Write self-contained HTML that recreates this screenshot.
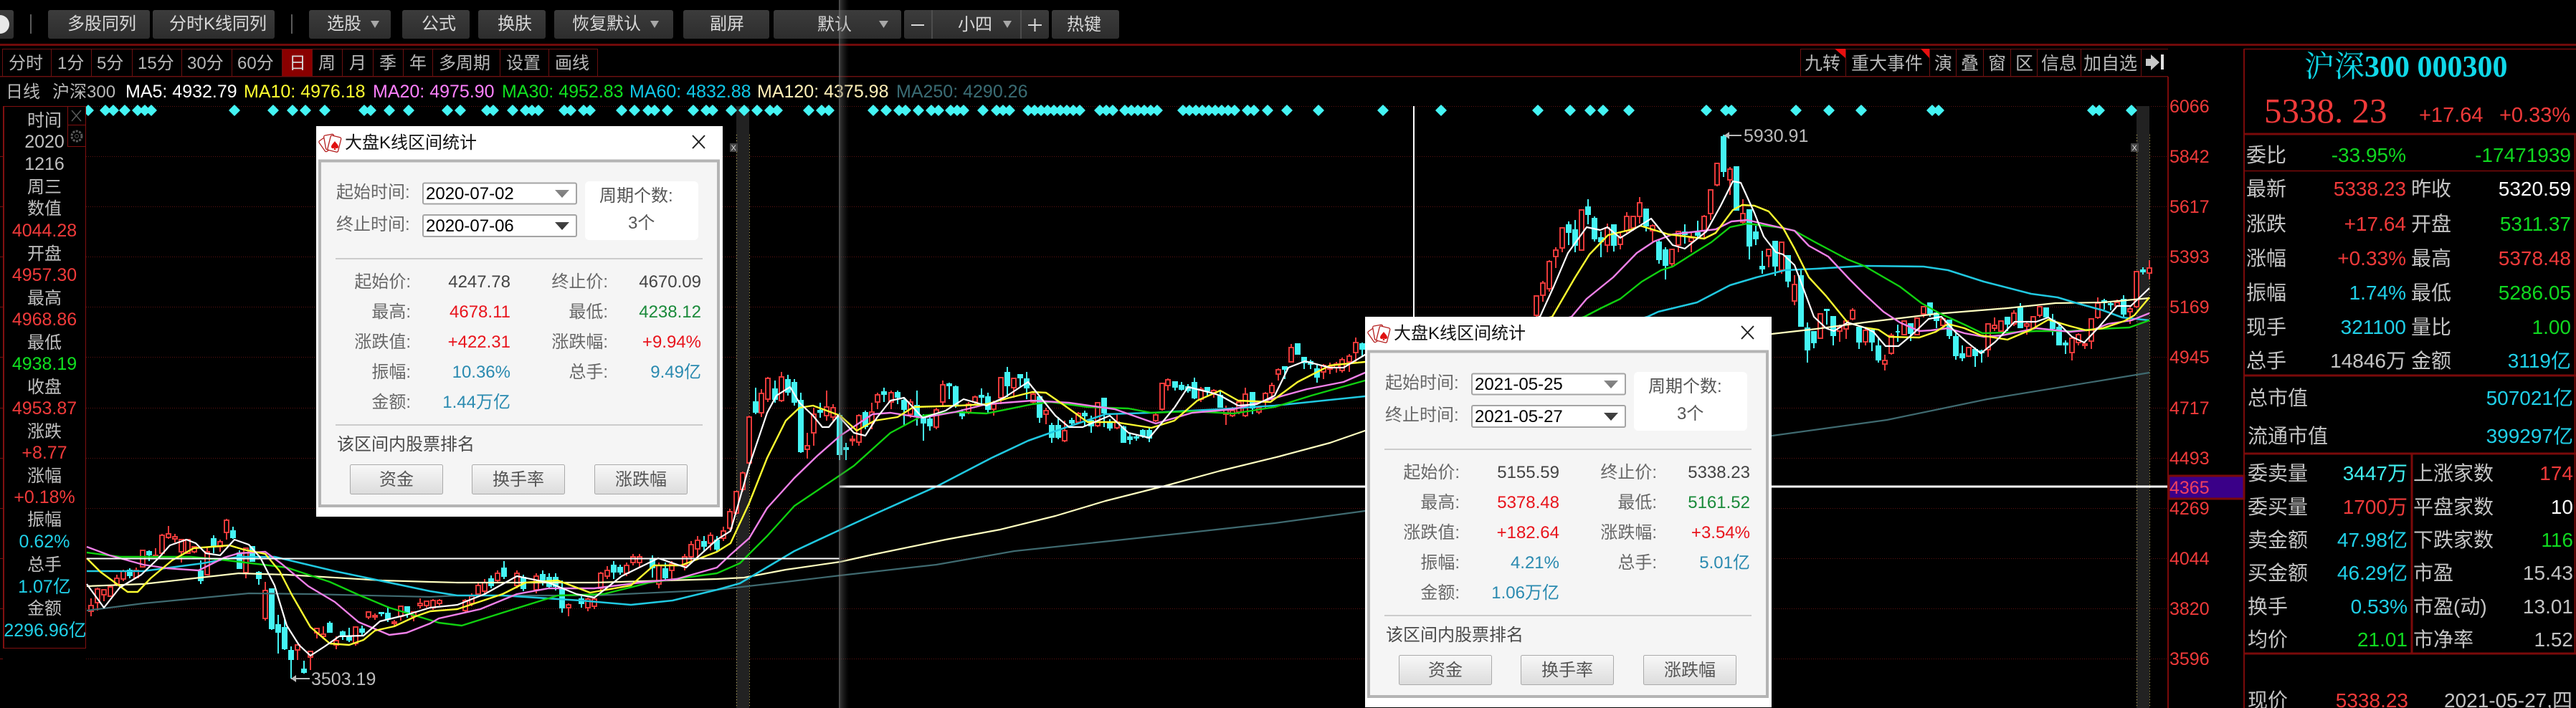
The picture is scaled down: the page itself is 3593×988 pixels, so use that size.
<!DOCTYPE html>
<html lang="zh-CN">
<head>
<meta charset="utf-8">
<title>沪深300 000300</title>
<style>
html,body{margin:0;padding:0;background:#000;width:3593px;height:988px;overflow:hidden}
svg{display:block;position:absolute;left:0;top:0}
text{font-family:"Liberation Sans","Noto Sans CJK SC",sans-serif;white-space:pre}
.tb text{font-size:24px;fill:#d8d8d8}
.tab text{font-size:24px;fill:#b8b8b8}
.axis text{font-size:25px;fill:#f03a3a}
.lp text{font-size:24px;text-anchor:middle;fill:#c0c0c0}
.lp .r{fill:#f03a3a;font-size:25px}
.lp .g{fill:#10e020;font-size:25px}
.lp .c{fill:#20d0e8;font-size:25px}
.rp text{font-size:28px;fill:#c4c4c4}
.rp .e{text-anchor:end}
.rp .r{fill:#f03a3a}
.rp .g{fill:#10d820}
.rp .c{fill:#20d0e8}
.rp .w{fill:#fff}
.rp .l{fill:#40f0f0}
.dl text{font-size:24px;fill:#686868}
.dl .e{text-anchor:end}
.dl .m{text-anchor:middle}
.dl .v{fill:#444}
.dl .r{fill:#e8141c}
.dl .g{fill:#1a8a3a}
.dl .b{fill:#2a8ab0}
.dl .t{fill:#111}
.dl .k{fill:#000}
</style>
</head>
<body>
<svg width="3593" height="988" viewBox="0 0 3593 988" xmlns="http://www.w3.org/2000/svg">
<defs>
<linearGradient id="btn" x1="0" y1="0" x2="0" y2="1"><stop offset="0" stop-color="#3c3c3c"/><stop offset="1" stop-color="#2d2d2d"/></linearGradient>
<linearGradient id="gb" x1="0" y1="0" x2="0" y2="1"><stop offset="0" stop-color="#f8f8f8"/><stop offset="1" stop-color="#dcdcdc"/></linearGradient>
<linearGradient id="sh" x1="0" y1="0" x2="1" y2="0"><stop offset="0" stop-color="#808080" stop-opacity=".7"/><stop offset=".2" stop-color="#606060" stop-opacity=".45"/><stop offset="1" stop-color="#404040" stop-opacity="0"/></linearGradient>
<linearGradient id="tri" x1="0" y1="0" x2="0" y2="1"><stop offset="0" stop-color="#888"/><stop offset="1" stop-color="#333"/></linearGradient>
</defs>

<!-- toolbar -->
<g fill="url(#btn)">
<rect x="-4" y="14" width="23" height="40" rx="3"/>
<rect x="67" y="14" width="142" height="40" rx="3"/>
<rect x="213" y="14" width="170" height="40" rx="3"/>
<rect x="431" y="14" width="114" height="40" rx="3"/>
<rect x="561" y="14" width="94" height="40" rx="3"/>
<rect x="667" y="14" width="94" height="40" rx="3"/>
<rect x="773" y="14" width="166" height="40" rx="3"/>
<rect x="953" y="14" width="120" height="40" rx="3"/>
<rect x="1079" y="14" width="178" height="40" rx="3"/>
<rect x="1261" y="14" width="202" height="40" rx="3"/>
<rect x="1467" y="14" width="94" height="40" rx="3"/>
</g>
<circle cx="0" cy="34" r="13" fill="#e8e8e8"/>
<path d="M43 20V47M407 20V47" stroke="#5a5a5a" stroke-width="2"/>
<path d="M1300 14V54M1424 14V54" stroke="#555" stroke-width="1.5"/>
<g class="tb">
<text x="94" y="41">多股同列</text>
<text x="236" y="41">分时K线同列</text>
<text x="456" y="41">选股</text>
<text x="588" y="41">公式</text>
<text x="694" y="41">换肤</text>
<text x="798" y="41">恢复默认</text>
<text x="990" y="41">副屏</text>
<text x="1140" y="42">默认</text>
<text x="1336" y="42">小四</text>
<text x="1488" y="42">热键</text>
</g>
<path d="M517 29h12l-6 10zM907 29h12l-6 10zM1226 29h13l-6.500 10zM1399 29h12l-6 10z" fill="#a8a8a8"/>
<path d="M1271 35h18M1434 35h19M1443.500 26v18" stroke="#d8d8d8" stroke-width="2"/>

<rect x="0" y="61" width="3593" height="3" fill="#700a0a"/>

<!-- tabs -->
<rect x="393" y="68" width="43" height="38" fill="#8a0000"/>
<path d="M3 68.500H833M3.500 68V106M71.500 68V106M127.500 68V106M184.500 68V106M253.500 68V106M323.500 68V106M393.500 68V106M435.500 68V106M477.500 68V106M520.500 68V106M562.500 68V106M603.500 68V106M697.500 68V106M765.500 68V106M833.500 68V106" stroke="#6a1010" stroke-width="1" fill="none"/>
<rect x="0" y="106" width="3024" height="1.500" fill="#6a1010"/>
<g class="tab">
<text x="12" y="96">分时</text>
<text x="80" y="96">1分</text>
<text x="135" y="96">5分</text>
<text x="192" y="96">15分</text>
<text x="261" y="96">30分</text>
<text x="331" y="96">60分</text>
<text x="403" y="96" style="fill:#d8d8d8">日</text>
<text x="444" y="96">周</text>
<text x="487" y="96">月</text>
<text x="529" y="96">季</text>
<text x="571" y="96">年</text>
<text x="612" y="96">多周期</text>
<text x="706" y="96">设置</text>
<text x="774" y="96">画线</text>
</g>

<!-- right top tool box -->
<path d="M2511.500 68.500H3024M2511.500 68V107M2574.500 68V107M2691.500 68V107M2728.500 68V107M2766.500 68V107M2804.500 68V107M2841.500 68V107M2902.500 68V107M2986.500 68V107" stroke="#6a1010" stroke-width="1" fill="none"/>
<path d="M2559 68h15v13zM2679 68h12v13z" fill="#e81010"/>
<g class="tab">
<text x="2517" y="97" style="font-size:25px">九转</text>
<text x="2582" y="97" style="font-size:25px">重大事件</text>
<text x="2698" y="97" style="font-size:25px">演</text>
<text x="2735" y="97" style="font-size:25px">叠</text>
<text x="2773" y="97" style="font-size:25px">窗</text>
<text x="2811" y="97" style="font-size:25px">区</text>
<text x="2847" y="97" style="font-size:25px">信息</text>
<text x="2906" y="97" style="font-size:25px">加自选</text>
</g>
<path d="M2993 82h7v-6l12 11-12 11v-6h-7z" fill="#c8c8c8"/>
<rect x="3014" y="76" width="4" height="21" fill="#e0e0e0"/>

<!-- MA info -->
<g style="font-size:25px">
<text x="8" y="136" fill="#b8b8b8" style="font-size:24px">日线</text>
<text x="73" y="136" fill="#b8b8b8" style="font-size:24px">沪深300</text>
<text x="175" y="136" fill="#fff" style="font-size:25px">MA5: 4932.79</text>
<text x="340" y="136" fill="#ffff30" style="font-size:25px">MA10: 4976.18</text>
<text x="520" y="136" fill="#ff80ff" style="font-size:25px">MA20: 4975.90</text>
<text x="700" y="136" fill="#10e020" style="font-size:25px">MA30: 4952.83</text>
<text x="878" y="136" fill="#10c8e8" style="font-size:25px">MA60: 4832.88</text>
<text x="1056" y="136" fill="#fff0b8" style="font-size:25px">MA120: 4375.98</text>
<text x="1250" y="136" fill="#3a6c74" style="font-size:25px">MA250: 4290.26</text>
</g>

<!-- grid -->
<path d="M120 148.500H3024M120 218.500H3024M120 288.500H3024M120 358.500H3024M120 428.500H3024M120 498.500H3024M120 569.500H3024M120 639.500H3024M120 709.500H3024M120 779.500H3024M120 849.500H3024M120 919.500H3024" stroke="#5e1212" stroke-width="1" stroke-dasharray="1 2" fill="none"/>
<path d="M0 218.500h4M0 288.500h4M0 358.500h4M0 428.500h4M0 498.500h4M0 569.500h4M0 639.500h4M0 709.500h4M0 779.500h4M0 849.500h4M0 919.500h4" stroke="#7a1010" stroke-width="1"/>

<!-- selected bands -->
<rect x="1027" y="148" width="18" height="840" fill="#222"/>
<rect x="2980" y="148" width="18" height="840" fill="#222"/>
<path d="M1027.500 188V988M1045.500 188V988M2980.500 188V988M2998.500 188V988" stroke="#c8b860" stroke-width="1" stroke-dasharray="1 3"/>
<rect x="1018" y="200" width="11" height="12" fill="#444"/>
<rect x="2972" y="200" width="11" height="12" fill="#444"/>
<text x="1019.500" y="210" fill="#ddd" style="font-size:11px">X</text>
<text x="2973.500" y="210" fill="#ddd" style="font-size:11px">X</text>

<!-- diamonds -->
<path fill="#44f4f4" stroke="#44f4f4" stroke-width="1.500" stroke-linejoin="round" d="M123 147l7 7-7 7-7-7zM147 147l7 7-7 7-7-7zM158 147l7 7-7 7-7-7zM174 147l7 7-7 7-7-7zM192 147l7 7-7 7-7-7zM202 147l7 7-7 7-7-7zM211 147l7 7-7 7-7-7zM327 147l7 7-7 7-7-7zM381 147l7 7-7 7-7-7zM408 147l7 7-7 7-7-7zM426 147l7 7-7 7-7-7zM453 147l7 7-7 7-7-7zM508 147l7 7-7 7-7-7zM517 147l7 7-7 7-7-7zM543 147l7 7-7 7-7-7zM570 147l7 7-7 7-7-7zM624 147l7 7-7 7-7-7zM642 147l7 7-7 7-7-7zM679 147l7 7-7 7-7-7zM688 147l7 7-7 7-7-7zM715 147l7 7-7 7-7-7zM733 147l7 7-7 7-7-7zM742 147l7 7-7 7-7-7zM751 147l7 7-7 7-7-7zM787 147l7 7-7 7-7-7zM796 147l7 7-7 7-7-7zM814 147l7 7-7 7-7-7zM823 147l7 7-7 7-7-7zM867 147l7 7-7 7-7-7zM885 147l7 7-7 7-7-7zM904 147l7 7-7 7-7-7zM913 147l7 7-7 7-7-7zM931 147l7 7-7 7-7-7zM967 147l7 7-7 7-7-7zM985 147l7 7-7 7-7-7zM994 147l7 7-7 7-7-7zM1020 147l7 7-7 7-7-7zM1038 147l7 7-7 7-7-7zM1056 147l7 7-7 7-7-7zM1074 147l7 7-7 7-7-7zM1084 147l7 7-7 7-7-7zM1128 147l7 7-7 7-7-7zM1146 147l7 7-7 7-7-7zM1156 147l7 7-7 7-7-7zM1218 147l7 7-7 7-7-7zM1236 147l7 7-7 7-7-7zM1254 147l7 7-7 7-7-7zM1263 147l7 7-7 7-7-7zM1281 147l7 7-7 7-7-7zM1299 147l7 7-7 7-7-7zM1309 147l7 7-7 7-7-7zM1326 147l7 7-7 7-7-7zM1335 147l7 7-7 7-7-7zM1344 147l7 7-7 7-7-7zM1371 147l7 7-7 7-7-7zM1390 147l7 7-7 7-7-7zM1399 147l7 7-7 7-7-7zM1408 147l7 7-7 7-7-7zM1434 147l7 7-7 7-7-7zM1443 147l7 7-7 7-7-7zM1452 147l7 7-7 7-7-7zM1461 147l7 7-7 7-7-7zM1470 147l7 7-7 7-7-7zM1479 147l7 7-7 7-7-7zM1488 147l7 7-7 7-7-7zM1497 147l7 7-7 7-7-7zM1506 147l7 7-7 7-7-7zM1534 147l7 7-7 7-7-7zM1543 147l7 7-7 7-7-7zM1552 147l7 7-7 7-7-7zM1569 147l7 7-7 7-7-7zM1578 147l7 7-7 7-7-7zM1587 147l7 7-7 7-7-7zM1596 147l7 7-7 7-7-7zM1605 147l7 7-7 7-7-7zM1614 147l7 7-7 7-7-7zM1650 147l7 7-7 7-7-7zM1659 147l7 7-7 7-7-7zM1668 147l7 7-7 7-7-7zM1677 147l7 7-7 7-7-7zM1686 147l7 7-7 7-7-7zM1695 147l7 7-7 7-7-7zM1704 147l7 7-7 7-7-7zM1713 147l7 7-7 7-7-7zM1722 147l7 7-7 7-7-7zM1740 147l7 7-7 7-7-7zM1749 147l7 7-7 7-7-7zM1768 147l7 7-7 7-7-7zM1795 147l7 7-7 7-7-7zM1839 147l7 7-7 7-7-7zM1929 147l7 7-7 7-7-7zM2010 147l7 7-7 7-7-7zM2145 147l7 7-7 7-7-7zM2190 147l7 7-7 7-7-7zM2218 147l7 7-7 7-7-7zM2236 147l7 7-7 7-7-7zM2272 147l7 7-7 7-7-7zM2380 147l7 7-7 7-7-7zM2407 147l7 7-7 7-7-7zM2415 147l7 7-7 7-7-7zM2505 147l7 7-7 7-7-7zM2551 147l7 7-7 7-7-7zM2596 147l7 7-7 7-7-7zM2695 147l7 7-7 7-7-7zM2704 147l7 7-7 7-7-7zM2919 147l7 7-7 7-7-7zM2928 147l7 7-7 7-7-7zM2973 147l7 7-7 7-7-7z"/>

<!-- red candles -->
<path shape-rendering="crispEdges" fill="#000" stroke="#e83a3a" stroke-width="2" d="
M127 835V845h3V853h-6V845h3M127 853V860
M136 820V822h3V841h-6V822h3M136 841V852
M145 822V823h3V830h-6V823h3M145 830V839
M154 818V819h3V832h-6V819h3M154 832V833
M163 802V807h3V815h-6V807h3M163 815V818
M172 795V797h3V808h-6V797h3M172 808V811
M190 792V796h3V806h-6V796h3M190 806V807
M199 767V768h3V791h-6V768h3M199 791V792
M217 765V775h3V777h-6V775h3M217 777V778
M226 745V747h3V772h-6V747h3M226 772V775
M235 734V745h3V750h-6V745h3M235 750V752
M244 745V749h3V752h-6V749h3M244 752V757
M253 752V753h3V770h-6V753h3M253 770V785
M262 752V753h3V772h-6V753h3M262 772V773
M271 762V763h3V770h-6V763h3M271 770V772
M289 763V770h3V802h-6V770h3M289 802V803
M307 753V756h3V763h-6V756h3M307 763V770
M316 724V726h3V743h-6V726h3M316 743V753
M343 765V765h3V799h-6V765h3M343 799V807
M370 812V824h3V863h-6V824h3M370 863V866
M415 899V900h3V907h-6V900h3M415 907V921
M433 908V909h3V917h-6V909h3M433 917V935
M442 877V877h3V883h-6V877h3M442 883V891
M451 874V885h3V888h-6V885h3M451 888V892
M469 888V894h3V900h-6V894h3M469 900V906
M496 874V875h3V898h-6V875h3M496 898V901
M514 853V854h3V861h-6V854h3M514 861V864
M523 856V859h3V861h-6V859h3M523 861V865
M550 865V868h3V870h-6V868h3M550 870V874
M559 846V846h3V860h-6V846h3M559 860V866
M577 853V854h3V860h-6V854h3M577 860V867
M586 835V842h3V845h-6V842h3M586 845V849
M595 838V839h3V845h-6V839h3M595 845V848
M604 836V838h3V848h-6V838h3M604 848V851
M613 836V838h3V842h-6V838h3M613 842V845
M649 836V838h3V852h-6V838h3M649 852V855
M658 828V832h3V842h-6V832h3M658 842V846
M667 812V817h3V829h-6V817h3M667 829V832
M676 808V813h3V825h-6V813h3M676 825V829
M694 796V800h3V810h-6V800h3M694 810V812
M721 796V800h3V817h-6V800h3M721 817V821
M748 800V804h3V823h-6V804h3M748 823V828
M793 842V844h3V848h-6V844h3M793 848V860
M820 834V836h3V848h-6V836h3M820 848V853
M829 833V836h3V846h-6V836h3M829 846V850
M838 798V800h3V821h-6V800h3M838 821V825
M847 790V796h3V804h-6V796h3M847 804V808
M874 785V789h3V800h-6V789h3M874 800V804
M883 773V777h3V785h-6V777h3M883 785V789
M892 773V777h3V785h-6V777h3M892 785V792
M919 785V789h3V815h-6V789h3M919 815V821
M937 783V787h3V796h-6V787h3M937 796V810
M955 773V777h3V789h-6V777h3M955 789V796
M964 755V760h3V777h-6V760h3M964 777V785
M973 748V754h3V766h-6V754h3M973 766V780
M991 743V747h3V758h-6V747h3M991 758V768
M1009 735V741h3V751h-6V741h3M1009 751V755
M1018 710V714h3V737h-6V714h3M1018 737V740
M1027 685V686h3V716h-6V686h3M1027 716V718
M1036 658V660h3V683h-6V660h3M1036 683V686
M1045 580V582h3V646h-6V582h3M1045 646V648
M1062 543V549h3V576h-6V549h3M1062 576V582
M1071 526V528h3V557h-6V528h3M1071 557V561
M1090 519V526h3V559h-6V526h3M1090 559V561
M1126 604V622h3V627h-6V622h3M1126 627V640
M1135 569V578h3V604h-6V578h3M1135 604V622
M1153 545V568h3V580h-6V568h3M1153 580V587
M1162 564V569h3V582h-6V569h3M1162 582V587
M1189 608V613h3V615h-6V613h3M1189 615V622
M1198 578V580h3V617h-6V580h3M1198 617V622
M1216 562V575h3V590h-6V575h3M1216 590V599
M1224 548V551h3V561h-6V551h3M1224 561V571
M1243 545V548h3V561h-6V548h3M1243 561V571
M1270 557V561h3V578h-6V561h3M1270 578V583
M1306 569V572h3V596h-6V572h3M1306 596V599
M1315 531V537h3V561h-6V537h3M1315 561V568
M1351 561V564h3V575h-6V564h3M1351 575V578
M1360 552V554h3V561h-6V554h3M1360 561V566
M1386 559V564h3V571h-6V564h3M1386 571V580
M1396 526V527h3V555h-6V527h3M1396 555V564
M1414 527V528h3V541h-6V528h3M1414 541V555
M1441 547V550h3V561h-6V550h3M1441 561V564
M1459 569V573h3V578h-6V573h3M1459 578V592
M1485 587V601h3V615h-6V601h3M1485 615V617
M1504 575V577h3V589h-6V577h3M1504 589V590
M1531 561V562h3V594h-6V562h3M1531 594V596
M1558 578V589h3V597h-6V589h3M1558 597V599
M1612 576V579h3V587h-6V579h3M1612 587V589
M1621 534V535h3V571h-6V535h3M1621 571V573
M1629 528V530h3V538h-6V530h3M1629 538V545
M1675 540V543h3V557h-6V543h3M1675 557V561
M1693 543V545h3V548h-6V545h3M1693 548V555
M1710 566V571h3V578h-6V571h3M1710 578V593
M1719 568V573h3V580h-6V573h3M1719 580V582
M1728 559V561h3V575h-6V561h3M1728 575V578
M1737 541V550h3V580h-6V550h3M1737 580V582
M1756 566V569h3V575h-6V569h3M1756 575V578
M1765 547V549h3V561h-6V549h3M1765 561V571
M1774 534V538h3V548h-6V538h3M1774 548V561
M1783 514V516h3V522h-6V516h3M1783 522V531
M1801 480V485h3V505h-6V485h3M1801 505V506
M1846 508V510h3V519h-6V510h3M1846 519V529
M1855 506V512h3V515h-6V512h3M1855 515V522
M1864 505V508h3V513h-6V508h3M1864 513V520
M1872 499V502h3V517h-6V502h3M1872 517V520
M1882 494V497h3V505h-6V497h3M1882 505V519
M1891 471V478h3V492h-6V478h3M1891 492V505
M2143 412V413h3V440h-6V413h3M2143 440V442
M2152 392V395h3V412h-6V395h3M2152 412V421
M2161 363V365h3V403h-6V365h3M2161 403V407
M2170 345V349h3V358h-6V349h3M2170 358V374
M2179 318V318h3V346h-6V318h3M2179 346V352
M2206 293V293h3V349h-6V293h3M2206 349V350
M2242 312V318h3V342h-6V318h3M2242 342V352
M2260 325V330h3V341h-6V330h3M2260 341V348
M2269 296V302h3V322h-6V302h3M2269 322V325
M2278 302V302h3V318h-6V302h3M2278 318V322
M2287 275V283h3V302h-6V283h3M2287 302V312
M2305 313V315h3V322h-6V315h3M2305 322V337
M2332 348V348h3V368h-6V348h3M2332 368V372
M2341 322V323h3V342h-6V323h3M2341 342V352
M2359 325V332h3V337h-6V332h3M2359 337V352
M2377 300V302h3V322h-6V302h3M2377 322V332
M2386 264V265h3V298h-6V265h3M2386 298V307
M2395 227V228h3V258h-6V228h3M2395 258V260
M2413 233V236h3V251h-6V236h3M2413 251V272
M2431 278V298h3V310h-6V298h3M2431 310V312
M2467 348V348h3V357h-6V348h3M2467 357V373
M2485 338V338h3V377h-6V338h3M2485 377V382
M2503 384V397h3V420h-6V397h3M2503 420V426
M2539 437V438h3V472h-6V438h3M2539 472V473
M2566 453V457h3V462h-6V457h3M2566 462V477
M2575 447V448h3V459h-6V448h3M2575 459V473
M2584 430V433h3V445h-6V433h3M2584 445V447
M2602 458V461h3V477h-6V461h3M2602 477V482
M2629 495V503h3V508h-6V503h3M2629 508V517
M2638 465V468h3V493h-6V468h3M2638 493V495
M2656 447V448h3V467h-6V448h3M2656 467V468
M2674 443V444h3V467h-6V444h3M2674 467V468
M2683 427V428h3V438h-6V428h3M2683 438V443
M2710 443V445h3V454h-6V445h3M2710 454V456
M2746 484V485h3V497h-6V485h3M2746 497V498
M2773 452V452h3V488h-6V452h3M2773 488V498
M2782 443V454h3V458h-6V454h3M2782 458V462
M2791 447V448h3V462h-6V448h3M2791 462V463
M2809 433V437h3V452h-6V437h3M2809 452V455
M2827 450V452h3V455h-6V452h3M2827 455V467
M2836 442V442h3V458h-6V442h3M2836 458V460
M2845 427V428h3V440h-6V428h3M2845 440V443
M2890 470V472h3V492h-6V472h3M2890 492V503
M2899 465V467h3V478h-6V467h3M2899 478V482
M2908 477V480h3V482h-6V480h3M2908 482V487
M2917 444V445h3V476h-6V445h3M2917 476V487
M2926 415V423h3V443h-6V423h3M2926 443V445
M2953 418V422h3V427h-6V422h3M2953 427V428
M2971 427V431h3V435h-6V431h3M2971 435V452
M2980 378V379h3V428h-6V379h3M2980 428V430
M2998 363V374h3V381h-6V374h3M2998 381V390"/>

<!-- cyan candles -->
<path shape-rendering="crispEdges" fill="#44f4f4" stroke="#44f4f4" stroke-width="2" d="
M181 793V807M181 796h3V803h-6V796z
M208 768V783M208 770h3V774h-6V770z
M280 782V815M280 797h3V810h-6V797z
M298 747V772M298 752h3V763h-6V752z
M325 735V752M325 741h3V750h-6V741z
M334 768V794M334 772h3V793h-6V772z
M352 762V784M352 763h3V783h-6V763z
M361 797V816M361 799h3V807h-6V799z
M379 822V879M379 822h3V877h-6V822z
M388 858V912M388 872h3V882h-6V872z
M397 863V907M397 876h3V905h-6V876z
M406 902V947M406 908h3V920h-6V908z
M424 922V940M424 934h3V938h-6V934z
M460 867V883M460 870h3V882h-6V870z
M478 880V893M478 882h3V888h-6V882z
M487 876V896M487 889h3V893h-6V889z
M505 873V888M505 878h3V882h-6V878z
M532 854V860M532 855h3V856h-6V855z
M541 848V868M541 856h3V863h-6V856z
M568 846V862M568 847h3V855h-6V847z
M685 803V821M685 808h3V817h-6V808z
M703 783V808M703 793h3V804h-6V793z
M730 802V825M730 806h3V821h-6V806z
M757 796V817M757 802h3V813h-6V802z
M766 800V822M766 806h3V818h-6V806z
M775 800V824M775 806h3V818h-6V806z
M784 810V855M784 821h3V848h-6V821z
M811 832V848M811 836h3V842h-6V836z
M856 783V808M856 789h3V798h-6V789z
M865 788V802M865 792h3V798h-6V792z
M910 775V806M910 781h3V792h-6V781z
M928 785V810M928 794h3V806h-6V794z
M982 748V770M982 756h3V762h-6V756z
M1000 748V770M1000 754h3V766h-6V754z
M1054 541V578M1054 561h3V575h-6V561z
M1081 531V562M1081 543h3V557h-6V543z
M1099 523V552M1099 530h3V547h-6V530z
M1108 529V566M1108 534h3V561h-6V534z
M1117 548V632M1117 559h3V630h-6V559z
M1144 562V583M1144 573h3V575h-6V573z
M1171 576V642M1171 580h3V634h-6V580z
M1180 618V642M1180 625h3V627h-6V625z
M1207 573V599M1207 576h3V595h-6V576z
M1233 541V561M1233 547h3V550h-6V547z
M1252 545V564M1252 548h3V554h-6V548z
M1261 555V594M1261 559h3V571h-6V559z
M1279 545V594M1279 566h3V580h-6V566z
M1288 578V615M1288 583h3V590h-6V583z
M1297 580V601M1297 585h3V594h-6V585z
M1324 534V557M1324 536h3V538h-6V536z
M1333 538V569M1333 540h3V564h-6V540z
M1342 571V585M1342 575h3V580h-6V575z
M1369 542V566M1369 552h3V554h-6V552z
M1378 548V576M1378 554h3V571h-6V554z
M1405 512V554M1405 520h3V538h-6V520z
M1423 522V540M1423 523h3V527h-6V523z
M1432 519V557M1432 529h3V541h-6V529z
M1450 552V590M1450 554h3V582h-6V554z
M1467 590V618M1467 594h3V610h-6V594z
M1476 582V613M1476 594h3V610h-6V594z
M1495 583V594M1495 587h3V590h-6V587z
M1513 573V594M1513 577h3V580h-6V577z
M1522 580V604M1522 587h3V594h-6V587z
M1540 555V596M1540 556h3V576h-6V556z
M1548 585V601M1548 589h3V597h-6V589z
M1567 594V618M1567 596h3V617h-6V596z
M1576 604V620M1576 610h3V613h-6V610z
M1585 606V615M1585 610h3V611h-6V610z
M1594 599V611M1594 601h3V608h-6V601z
M1603 597V617M1603 601h3V611h-6V601z
M1639 532V545M1639 533h3V540h-6V533z
M1648 533V545M1648 538h3V543h-6V538z
M1657 536V548M1657 540h3V545h-6V540z
M1666 527V557M1666 534h3V555h-6V534z
M1684 540V552M1684 541h3V545h-6V541z
M1702 545V569M1702 552h3V568h-6V552z
M1747 547V578M1747 548h3V569h-6V548z
M1792 511V529M1792 512h3V515h-6V512z
M1810 479V495M1810 480h3V494h-6V480z
M1819 498V515M1819 499h3V506h-6V499z
M1828 502V515M1828 505h3V508h-6V505z
M1837 508V534M1837 515h3V526h-6V515z
M1900 478V498M1900 480h3V487h-6V480z
M2188 309V342M2188 314h3V324h-6V314z
M2197 307V352M2197 321h3V342h-6V321z
M2215 278V313M2215 289h3V299h-6V289z
M2224 302V337M2224 305h3V333h-6V305z
M2233 323V359M2233 332h3V337h-6V332z
M2251 313V351M2251 314h3V342h-6V314z
M2296 292V323M2296 292h3V315h-6V292z
M2314 335V368M2314 338h3V362h-6V338z
M2323 345V390M2323 349h3V370h-6V349z
M2350 313V340M2350 324h3V327h-6V324z
M2368 308V332M2368 325h3V328h-6V325z
M2404 188V247M2404 191h3V239h-6V191z
M2422 233V293M2422 233h3V293h-6V233z
M2440 293V362M2440 293h3V343h-6V293z
M2449 315V342M2449 324h3V333h-6V324z
M2458 350V382M2458 372h3V375h-6V372z
M2476 337V385M2476 337h3V371h-6V337z
M2494 357V401M2494 357h3V392h-6V357z
M2512 377V455M2512 385h3V455h-6V385z
M2521 450V506M2521 458h3V488h-6V458z
M2530 463V486M2530 463h3V478h-6V463z
M2548 432V453M2548 432h3V433h-6V432z
M2557 442V482M2557 442h3V468h-6V442z
M2593 457V487M2593 457h3V477h-6V457z
M2611 458V490M2611 461h3V477h-6V461z
M2620 472V506M2620 483h3V502h-6V483z
M2647 453V477M2647 463h3V463h-6V463z
M2665 452V476M2665 452h3V465h-6V452z
M2692 423V442M2692 423h3V437h-6V423z
M2701 435V458M2701 437h3V447h-6V437z
M2719 447V473M2719 447h3V468h-6V447z
M2728 465V502M2728 470h3V496h-6V470z
M2737 482V504M2737 494h3V499h-6V494z
M2755 485V512M2755 488h3V496h-6V488z
M2764 488V506M2764 490h3V492h-6V490z
M2800 442V462M2800 443h3V452h-6V443z
M2818 423V457M2818 430h3V457h-6V430z
M2854 429V443M2854 430h3V442h-6V430z
M2863 438V468M2863 447h3V458h-6V447z
M2872 453V482M2872 457h3V481h-6V457z
M2881 475V494M2881 479h3V481h-6V479z
M2935 417V432M2935 420h3V422h-6V420z
M2944 420V433M2944 424h3V425h-6V424z
M2962 412V442M2962 418h3V438h-6V418z
M2989 373V383M2989 377h3V379h-6V377z"/>

<!-- MAs -->
<g fill="none" stroke-width="2.200" stroke-linejoin="round">
<polyline stroke="#3f6a70" points="121,852 200,842 347,828 433,829 600,833 638,831 829,831 1000,823 1096,812 1172,803 1306,788 1415,769 1548,755 1651,744 1778,730 1904,713 2472,608 2632,586 2772,557 2998,520"/>
<polyline stroke="#ffffc0" points="121,818 200,815 333,800 400,802 533,810 600,812 638,813 829,813 1000,808 1038,806 1096,795 1172,784 1217,774 1319,753 1395,739 1472,720 1542,699 1625,678 1702,657 1784,637 1855,618 1904,601 2471,466 2533,459 2600,450 2700,438 2800,430 2867,423 2933,422 2998,416"/>
<polyline stroke="#20c8e0" stroke-width="2.600" points="121,797 200,797 283,786 333,777 383,777 467,797 600,825 638,831 701,831 810,838 880,844 938,838 1000,823 1032,814 1108,769 1166,742 1223,716 1306,679 1383,639 1434,615 1485,597 1542,578 1606,576 1702,571 1778,566 1904,553 2298,442 2313,435 2367,422 2413,398 2450,387 2490,377 2533,375 2600,371 2683,372 2717,377 2767,393 2833,410 2870,415 2900,424 2933,433 2960,443 2998,447"/>
<polyline stroke="#10d010" stroke-width="2.400" points="121,771 167,777 267,777 317,782 367,788 400,792 460,812 500,830 543,848 612,869 644,873 701,855 778,831 842,829 906,813 1000,800 1032,786 1070,748 1108,706 1166,667 1191,650 1242,604 1287,580 1332,575 1376,577 1440,564 1466,561 1517,568 1574,570 1606,576 1663,574 1721,577 1778,568 1829,552 1904,531 2210,442 2233,430 2260,417 2290,393 2317,377 2333,372 2363,353 2387,338 2413,317 2437,312 2487,318 2503,322 2530,337 2577,362 2600,371 2650,400 2680,423 2707,438 2740,453 2765,465 2803,464 2840,462 2887,462 2927,459 2970,457 2998,447"/>
<polyline stroke="#f080e8" stroke-width="2.400" points="121,763 153,775 200,788 233,793 277,796 313,778 333,772 370,770 393,787 430,818 467,840 500,868 543,886 567,883 600,870 612,863 670,850 721,829 765,821 829,821 893,813 944,808 1000,792 1019,774 1045,751 1070,709 1108,667 1140,636 1172,608 1217,578 1242,576 1287,583 1332,575 1376,564 1440,559 1491,562 1555,571 1612,591 1663,576 1721,571 1772,557 1823,543 1874,533 1904,520 2192,442 2213,417 2250,387 2283,353 2307,337 2333,327 2393,320 2415,309 2437,307 2463,313 2503,322 2523,343 2550,358 2580,390 2600,410 2627,435 2650,450 2677,462 2693,461 2717,458 2740,465 2767,470 2793,468 2840,458 2887,463 2920,460 2940,452 2973,447 2998,437"/>
<polyline stroke="#ffff30" stroke-width="2.400" points="121,779 140,798 178,826 192,826 210,807 240,782 270,765 320,761 340,767 370,773 390,797 407,830 433,875 460,898 487,900 507,893 523,880 550,874 580,860 600,853 638,850 701,829 733,813 778,810 823,827 880,817 912,789 950,789 1000,770 1019,758 1045,702 1070,639 1096,587 1115,569 1134,566 1153,573 1172,580 1195,601 1220,587 1252,582 1274,568 1338,566 1376,564 1408,555 1440,547 1459,548 1485,566 1517,589 1555,589 1606,597 1638,587 1670,559 1702,545 1727,559 1772,561 1810,533 1855,510 1904,505 2165,442 2197,387 2217,355 2243,328 2277,320 2288,315 2327,327 2377,333 2393,325 2417,293 2430,286 2447,287 2467,295 2487,318 2503,347 2523,387 2547,413 2577,450 2600,457 2620,460 2635,470 2677,471 2700,463 2717,452 2740,458 2763,468 2800,474 2833,460 2857,446 2887,455 2910,461 2933,458 2963,448 2977,440 2998,415"/>
<polyline stroke="#fff" points="121,815 145,848 167,820 197,802 220,780 237,761 260,753 273,758 287,772 307,775 327,753 347,760 363,778 383,817 400,873 417,900 433,915 453,902 473,888 507,887 530,867 567,858 600,848 638,844 676,829 721,804 765,813 804,829 829,834 867,804 918,779 957,792 1000,753 1019,741 1045,650 1070,576 1083,552 1102,540 1115,562 1134,580 1147,596 1156,596 1169,580 1191,604 1207,608 1223,583 1242,559 1261,555 1287,583 1319,573 1344,557 1376,566 1402,554 1434,533 1472,580 1491,596 1510,596 1548,580 1574,604 1603,611 1638,569 1657,540 1689,548 1702,552 1727,566 1753,564 1778,552 1797,513 1820,504 1855,513 1874,513 1904,495 2148,442 2167,400 2187,353 2213,317 2232,321 2242,317 2260,332 2287,315 2303,305 2333,342 2350,347 2380,323 2400,287 2417,253 2428,255 2447,297 2460,330 2477,352 2487,355 2503,370 2517,407 2530,442 2547,458 2558,462 2577,450 2600,457 2613,463 2630,483 2648,483 2667,467 2690,445 2708,442 2727,463 2743,477 2763,493 2783,477 2810,449 2840,449 2857,443 2873,453 2890,470 2907,478 2927,457 2953,427 2972,427 2998,402"/>
</g>

<!-- crosshair -->
<path d="M121 779.500H1171" stroke="#fff" stroke-width="2"/>
<rect x="1171" y="677.500" width="1853" height="3" fill="#fff"/>
<rect x="1971" y="148" width="2" height="294" fill="#fff"/>

<!-- high/low labels -->
<path d="M406 947h26" stroke="#bbb" stroke-width="2"/><path d="M406 947l7-5v10z" fill="#bbb"/>
<text x="434" y="956" fill="#bbb" style="font-size:25px">3503.19</text>
<path d="M2405 189h24" stroke="#bbb" stroke-width="2"/><path d="M2405 189l7-5v10z" fill="#bbb"/>
<text x="2432" y="198" fill="#bbb" style="font-size:25px">5930.91</text>

<!-- axis -->
<rect x="3023" y="107" width="2" height="881" fill="#7a0a0a"/>
<g class="axis">
<text x="3026" y="157">6066</text>
<text x="3026" y="227">5842</text>
<text x="3026" y="297">5617</text>
<text x="3026" y="367">5393</text>
<text x="3026" y="437">5169</text>
<text x="3026" y="507">4945</text>
<text x="3026" y="578">4717</text>
<text x="3026" y="648">4493</text>
<text x="3026" y="718">4269</text>
<text x="3026" y="788">4044</text>
<text x="3026" y="858">3820</text>
<text x="3026" y="928">3596</text>
</g>
<rect x="3025" y="664" width="105" height="32" fill="#3a0088" stroke="#7a0a0a" stroke-width="3"/>
<text x="3026" y="689" style="font-size:25px" fill="#f04060">4365</text>

<!-- left float panel -->
<rect x="5.500" y="148.500" width="114" height="756" fill="#000" stroke="#801010" stroke-width="1"/>
<path d="M94.500 148V204M94 204.500H120M94 174.500H120" stroke="#801010" stroke-width="1" fill="none"/>
<path d="M100 154l13 15M113 154l-13 15" stroke="#5a5a5a" stroke-width="1.500"/>
<circle cx="107" cy="190" r="7" fill="none" stroke="#5c5c5c" stroke-width="3" stroke-dasharray="3 1.500"/>
<circle cx="107" cy="190" r="2.500" fill="none" stroke="#5c5c5c"/>
<g class="lp">
<text x="62" y="176">时间</text>
<text x="62" y="206" style="font-size:25px">2020</text>
<text x="62" y="237" style="font-size:25px">1216</text>
<text x="62" y="269">周三</text>
<text x="62" y="299">数值</text>
<text x="62" y="330" class="r">4044.28</text>
<text x="62" y="362">开盘</text>
<text x="62" y="392" class="r">4957.30</text>
<text x="62" y="424">最高</text>
<text x="62" y="454" class="r">4968.86</text>
<text x="62" y="486">最低</text>
<text x="62" y="516" class="g">4938.19</text>
<text x="62" y="548">收盘</text>
<text x="62" y="578" class="r">4953.87</text>
<text x="62" y="610">涨跌</text>
<text x="62" y="640" class="r">+8.77</text>
<text x="62" y="672">涨幅</text>
<text x="62" y="702" class="r">+0.18%</text>
<text x="62" y="733">振幅</text>
<text x="62" y="764" class="c">0.62%</text>
<text x="62" y="796">总手</text>
<text x="62" y="827" class="c">1.07亿</text>
<text x="62" y="857">金额</text>
<text x="63" y="888" class="c">2296.96亿</text>
</g>
<rect x="4" y="148" width="1.500" height="757" fill="#801010"/>

<!-- vertical seam shadow -->
<rect x="1170" y="0" width="14" height="988" fill="url(#sh)"/>

<!-- dialog 1 -->
<g class="dl">
<rect x="441" y="176" width="567" height="545" fill="#fff"/>
<rect x="446" y="224.500" width="556" height="481.500" fill="#f5f5f5" stroke="#b4b4b4" stroke-width="4"/>
<g stroke="#b52020" stroke-width="1.300" fill="#fff">
<rect x="448" y="192" width="14" height="18" rx="2" transform="rotate(-35 455 201)"/>
<rect x="453" y="188" width="14" height="20" rx="2" transform="rotate(-10 460 198)"/>
<rect x="459" y="190" width="15" height="21" rx="2" transform="rotate(14 466 200)"/>
</g>
<path d="M467 197c2 3 5 5 5 8 0 2-3 3-4.500 1l1 3h-3l1-3c-1.500 2-4.500 1-4.500-1 0-3 3-5 5-8z" fill="#e01010"/>
<text x="481" y="207" class="t">大盘K线区间统计</text>
<path d="M966 189L983 207M983 189L966 207" stroke="#222" stroke-width="2"/>
<text x="469" y="276">起始时间:</text>
<text x="469" y="321">终止时间:</text>
<rect x="590" y="255.500" width="214" height="29" rx="2" fill="#fff" stroke="#a4a4a4" stroke-width="2"/>
<rect x="590" y="300" width="214" height="30" rx="2" fill="#fff" stroke="#a4a4a4" stroke-width="2"/>
<text x="594" y="278" class="k">2020-07-02</text>
<text x="594" y="323" class="k">2020-07-06</text>
<path d="M774 265h20l-10 11zM774 310h20l-10 11z" fill="url(#tri)"/>
<rect x="816" y="253" width="158" height="82" rx="6" fill="#fff"/>
<text x="836" y="281" style="fill:#555">周期个数:</text>
<text x="876" y="319" style="fill:#555">3个</text>
<rect x="468" y="360" width="512" height="2" fill="#ccc"/>
<text x="573" y="401" class="e">起始价:</text>
<text x="712" y="401" class="e v">4247.78</text>
<text x="848" y="401" class="e">终止价:</text>
<text x="978" y="401" class="e v">4670.09</text>
<text x="573" y="443" class="e">最高:</text>
<text x="712" y="443" class="e r">4678.11</text>
<text x="848" y="443" class="e">最低:</text>
<text x="978" y="443" class="e g">4238.12</text>
<text x="573" y="485" class="e">涨跌值:</text>
<text x="712" y="485" class="e r">+422.31</text>
<text x="848" y="485" class="e">涨跌幅:</text>
<text x="978" y="485" class="e r">+9.94%</text>
<text x="573" y="527" class="e">振幅:</text>
<text x="712" y="527" class="e b">10.36%</text>
<text x="848" y="527" class="e">总手:</text>
<text x="978" y="527" class="e b">9.49亿</text>
<text x="573" y="569" class="e">金额:</text>
<text x="712" y="569" class="e b">1.44万亿</text>
<rect x="468" y="592" width="512" height="2" fill="#ccc"/>
<text x="470" y="628" style="fill:#4a4a4a">该区间内股票排名</text>
<rect x="488.500" y="648.500" width="129" height="41" rx="2" fill="url(#gb)" stroke="#aaa"/>
<rect x="658.500" y="648.500" width="129" height="41" rx="2" fill="url(#gb)" stroke="#aaa"/>
<rect x="829.500" y="648.500" width="129" height="41" rx="2" fill="url(#gb)" stroke="#aaa"/>
<text x="553" y="677" class="m" style="fill:#555">资金</text>
<text x="723" y="677" class="m" style="fill:#555">换手率</text>
<text x="894" y="677" class="m" style="fill:#555">涨跌幅</text>
</g>

<!-- dialog 2 -->
<g class="dl" transform="translate(1463 266)">
<rect x="441" y="176" width="567" height="545" fill="#fff"/>
<rect x="446" y="224.500" width="556" height="481.500" fill="#f5f5f5" stroke="#b4b4b4" stroke-width="4"/>
<g stroke="#b52020" stroke-width="1.300" fill="#fff">
<rect x="448" y="192" width="14" height="18" rx="2" transform="rotate(-35 455 201)"/>
<rect x="453" y="188" width="14" height="20" rx="2" transform="rotate(-10 460 198)"/>
<rect x="459" y="190" width="15" height="21" rx="2" transform="rotate(14 466 200)"/>
</g>
<path d="M467 197c2 3 5 5 5 8 0 2-3 3-4.500 1l1 3h-3l1-3c-1.500 2-4.500 1-4.500-1 0-3 3-5 5-8z" fill="#e01010"/>
<text x="481" y="207" class="t">大盘K线区间统计</text>
<path d="M966 189L983 207M983 189L966 207" stroke="#222" stroke-width="2"/>
<text x="469" y="276">起始时间:</text>
<text x="469" y="321">终止时间:</text>
<rect x="590" y="255.500" width="214" height="29" rx="2" fill="#fff" stroke="#a4a4a4" stroke-width="2"/>
<rect x="590" y="300" width="214" height="30" rx="2" fill="#fff" stroke="#a4a4a4" stroke-width="2"/>
<text x="594" y="278" class="k">2021-05-25</text>
<text x="594" y="323" class="k">2021-05-27</text>
<path d="M774 265h20l-10 11zM774 310h20l-10 11z" fill="url(#tri)"/>
<rect x="816" y="253" width="158" height="82" rx="6" fill="#fff"/>
<text x="836" y="281" style="fill:#555">周期个数:</text>
<text x="876" y="319" style="fill:#555">3个</text>
<rect x="468" y="360" width="512" height="2" fill="#ccc"/>
<text x="573" y="401" class="e">起始价:</text>
<text x="712" y="401" class="e v">5155.59</text>
<text x="848" y="401" class="e">终止价:</text>
<text x="978" y="401" class="e v">5338.23</text>
<text x="573" y="443" class="e">最高:</text>
<text x="712" y="443" class="e r">5378.48</text>
<text x="848" y="443" class="e">最低:</text>
<text x="978" y="443" class="e g">5161.52</text>
<text x="573" y="485" class="e">涨跌值:</text>
<text x="712" y="485" class="e r">+182.64</text>
<text x="848" y="485" class="e">涨跌幅:</text>
<text x="978" y="485" class="e r">+3.54%</text>
<text x="573" y="527" class="e">振幅:</text>
<text x="712" y="527" class="e b">4.21%</text>
<text x="848" y="527" class="e">总手:</text>
<text x="978" y="527" class="e b">5.01亿</text>
<text x="573" y="569" class="e">金额:</text>
<text x="712" y="569" class="e b">1.06万亿</text>
<rect x="468" y="592" width="512" height="2" fill="#ccc"/>
<text x="470" y="628" style="fill:#4a4a4a">该区间内股票排名</text>
<rect x="488.500" y="648.500" width="129" height="41" rx="2" fill="url(#gb)" stroke="#aaa"/>
<rect x="658.500" y="648.500" width="129" height="41" rx="2" fill="url(#gb)" stroke="#aaa"/>
<rect x="829.500" y="648.500" width="129" height="41" rx="2" fill="url(#gb)" stroke="#aaa"/>
<text x="553" y="677" class="m" style="fill:#555">资金</text>
<text x="723" y="677" class="m" style="fill:#555">换手率</text>
<text x="894" y="677" class="m" style="fill:#555">涨跌幅</text>
</g>

<!-- right panel -->
<g fill="none" stroke="#7a0a0a">
<path d="M3130 68.500H3593" stroke-width="1.500"/>
<path d="M3130 68V988" stroke-width="2"/>
<path d="M3130 187H3593" stroke-width="3"/>
<path d="M3130 238.500H3593" stroke-width="1.500"/>
<path d="M3130 524H3593" stroke-width="3"/>
<path d="M3130 633H3593" stroke-width="3"/>
<path d="M3130 912H3593" stroke-width="3"/>
<path d="M3364 633V912" stroke-width="3"/>
<path d="M3591.500 187V912" stroke-width="2"/>
</g>
<text x="3214" y="107" style="font-size:42px;font-family:'Liberation Serif','Noto Serif CJK SC',serif" fill="#10d8e8">沪深<tspan font-weight="bold" style="font-family:'Liberation Serif',serif">300 000300</tspan></text>
<text x="3158" y="171" style="font-size:49px;font-family:'Liberation Serif',serif" fill="#f03a3a">5338. 23</text>
<text x="3374" y="170" style="font-size:29px" fill="#f03a3a">+17.64</text>
<text x="3486" y="170" style="font-size:29px" fill="#f03a3a">+0.33%</text>
<g class="rp">
<text x="3133" y="226">委比</text>
<text x="3356" y="226" class="e g">-33.95%</text>
<text x="3586" y="226" class="e g">-17471939</text>

<text x="3133" y="273">最新</text>
<text x="3356" y="273" class="e r">5338.23</text>
<text x="3363" y="273">昨收</text>
<text x="3586" y="273" class="e w">5320.59</text>

<text x="3133" y="322">涨跌</text>
<text x="3356" y="322" class="e r">+17.64</text>
<text x="3363" y="322">开盘</text>
<text x="3586" y="322" class="e g">5311.37</text>

<text x="3133" y="370">涨幅</text>
<text x="3356" y="370" class="e r">+0.33%</text>
<text x="3363" y="370">最高</text>
<text x="3586" y="370" class="e r">5378.48</text>

<text x="3133" y="418">振幅</text>
<text x="3356" y="418" class="e c">1.74%</text>
<text x="3363" y="418">最低</text>
<text x="3586" y="418" class="e g">5286.05</text>

<text x="3133" y="466">现手</text>
<text x="3356" y="466" class="e c">321100</text>
<text x="3363" y="466">量比</text>
<text x="3586" y="466" class="e g">1.00</text>

<text x="3133" y="513">总手</text>
<text x="3356" y="513" class="e">14846万</text>
<text x="3363" y="513">金额</text>
<text x="3586" y="513" class="e c">3119亿</text>

<text x="3135" y="565">总市值</text>
<text x="3589" y="565" class="e c">507021亿</text>
<text x="3135" y="618">流通市值</text>
<text x="3589" y="618" class="e c">399297亿</text>

<text x="3135" y="670">委卖量</text>
<text x="3358" y="670" class="e l">3447万</text>
<text x="3366" y="670">上涨家数</text>
<text x="3589" y="670" class="e r">174</text>

<text x="3135" y="717">委买量</text>
<text x="3358" y="717" class="e r">1700万</text>
<text x="3366" y="717">平盘家数</text>
<text x="3589" y="717" class="e w">10</text>

<text x="3135" y="763">卖金额</text>
<text x="3358" y="763" class="e c">47.98亿</text>
<text x="3366" y="763">下跌家数</text>
<text x="3589" y="763" class="e g">116</text>

<text x="3135" y="809">买金额</text>
<text x="3358" y="809" class="e c">46.29亿</text>
<text x="3366" y="809">市盈</text>
<text x="3589" y="809" class="e">15.43</text>

<text x="3135" y="856">换手</text>
<text x="3358" y="856" class="e c">0.53%</text>
<text x="3366" y="856">市盈(动)</text>
<text x="3589" y="856" class="e">13.01</text>

<text x="3135" y="902">均价</text>
<text x="3358" y="902" class="e g">21.01</text>
<text x="3366" y="902">市净率</text>
<text x="3589" y="902" class="e">1.52</text>

<text x="3135" y="987">现价</text>
<text x="3359" y="987" class="e r">5338.23</text>
<text x="3588" y="987" class="e">2021-05-27,四</text>
</g>
</svg>
</body>
</html>
